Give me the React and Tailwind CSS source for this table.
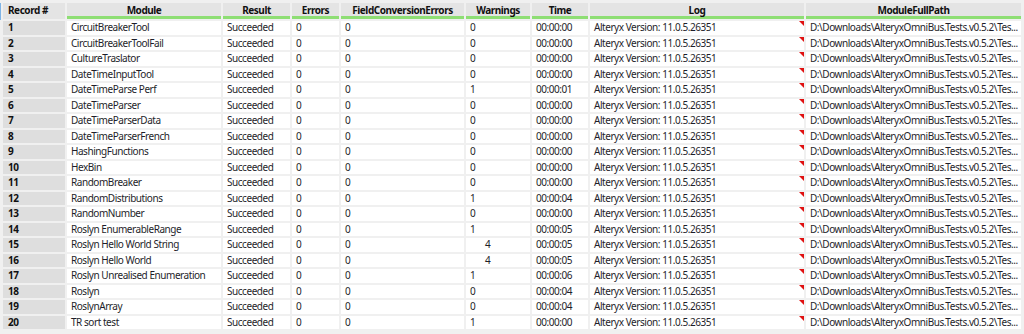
import React from 'react';

const columns = [
  { key: 'record', label: 'Record #' },
  { key: 'module', label: 'Module' },
  { key: 'result', label: 'Result' },
  { key: 'errors', label: 'Errors' },
  { key: 'fce', label: 'FieldConversionErrors' },
  { key: 'warnings', label: 'Warnings' },
  { key: 'time', label: 'Time' },
  { key: 'log', label: 'Log' },
  { key: 'path', label: 'ModuleFullPath' },
];

const rows = [
  ['CircuitBreakerTool', '0', '00:00:00'],
  ['CircuitBreakerToolFail', '0', '00:00:00'],
  ['CultureTraslator', '0', '00:00:00'],
  ['DateTimeInputTool', '0', '00:00:00'],
  ['DateTimeParse Perf', '1', '00:00:01'],
  ['DateTimeParser', '0', '00:00:00'],
  ['DateTimeParserData', '0', '00:00:00'],
  ['DateTimeParserFrench', '0', '00:00:00'],
  ['HashingFunctions', '0', '00:00:00'],
  ['HexBin', '0', '00:00:00'],
  ['RandomBreaker', '0', '00:00:00'],
  ['RandomDistributions', '1', '00:00:04'],
  ['RandomNumber', '0', '00:00:00'],
  ['Roslyn EnumerableRange', '1', '00:00:05'],
  ['Roslyn Hello World String', '4', '00:00:05'],
  ['Roslyn Hello World', '4', '00:00:05'],
  ['Roslyn Unrealised Enumeration', '1', '00:00:06'],
  ['Roslyn', '0', '00:00:04'],
  ['RoslynArray', '0', '00:00:04'],
  ['TR sort test', '1', '00:00:00'],
];

const LOG = 'Alteryx Version: 11.0.5.26351';
const PATH = 'D:\\Downloads\\AlteryxOmniBus.Tests.v0.5.2\\Tes...';

const cell = 'bg-white h-[13.5px] leading-[13.5px] pl-[4px] whitespace-nowrap overflow-hidden text-[#1e1e2a]';

export default function App() {
  return (
    <div
      className="w-[1024px] h-[334px] bg-[#f0f0f0] overflow-hidden relative text-[10px] tracking-[-0.45px]"
      style={{ fontFamily: '"Noto Sans", "Open Sans", sans-serif' }}
    >
      <div className="absolute left-0 top-[3px] w-[1px] h-[17px] bg-[#7fb4e6]" />
      <div className="pt-[3px] pl-[3px]">
        <div className="grid grid-cols-[62px_154px_67px_47px_123px_64px_56px_214px_215px] gap-[2px] bg-[#f0f0f0]">
          {columns.map((c, i) => (
            <div
              key={c.key}
              className={`h-[16px] bg-[#e4e4e4] font-bold text-[#111] leading-[15px] whitespace-nowrap ${
                i === 0 ? 'pl-[5px] text-left' : 'text-center border-b-[3px] border-[#8ede74]'
              }`}
            >
              {c.label}
            </div>
          ))}
          {rows.map((r, idx) => (
            <React.Fragment key={idx}>
              <div className="bg-[#dedede] h-[13.5px] leading-[13.5px] pl-[5px] font-bold text-[#111]">{idx + 1}</div>
              <div className={cell}>{r[0]}</div>
              <div className={cell}>Succeeded</div>
              <div className={cell}>0</div>
              <div className={cell}>0</div>
              <div className={`${cell} ${r[1] === '4' ? 'pl-[19px]' : ''}`}>{r[1]}</div>
              <div className={cell}>{r[2]}</div>
              <div className={`${cell} relative`}>
                {LOG}
                <span className="absolute right-0 top-0 w-0 h-0 border-t-[5px] border-t-[#e01010] border-l-[5px] border-l-transparent" />
              </div>
              <div className={cell}>{PATH}</div>
            </React.Fragment>
          ))}
        </div>
      </div>
    </div>
  );
}
